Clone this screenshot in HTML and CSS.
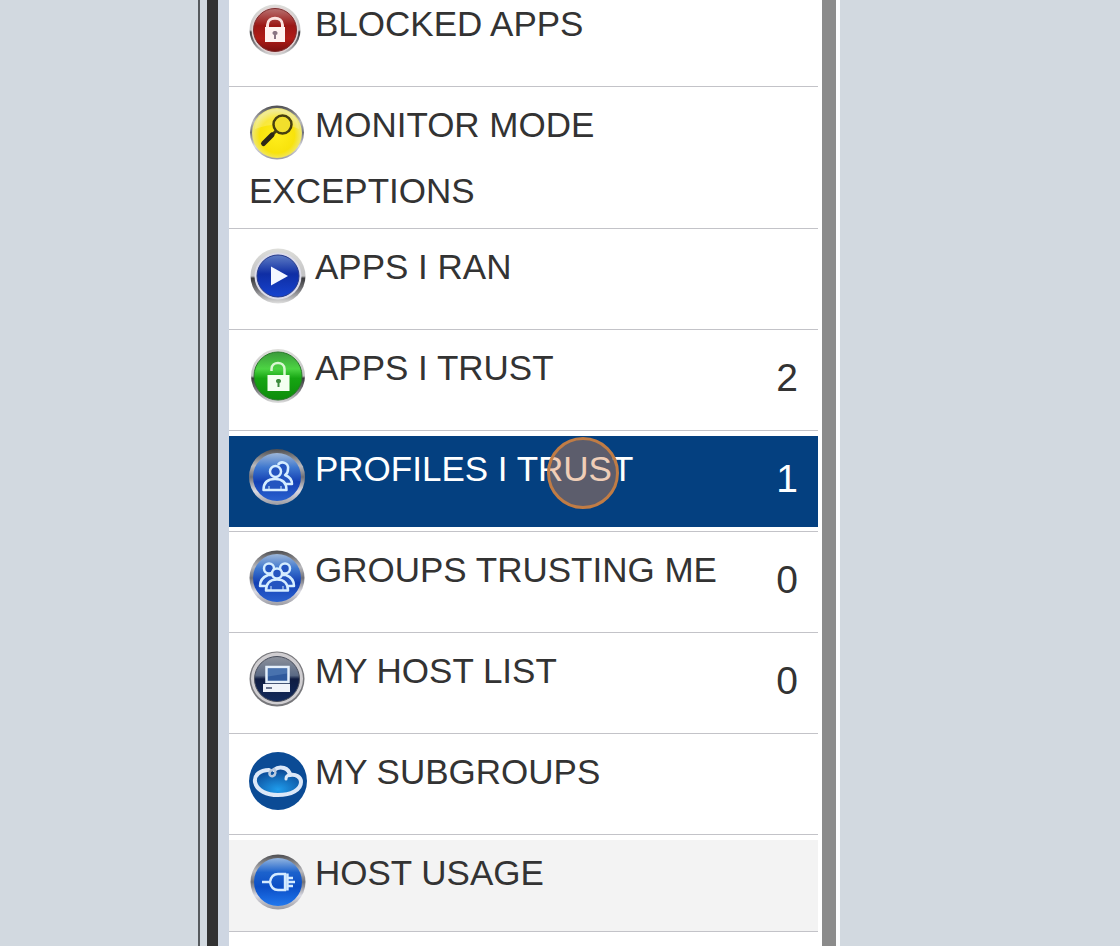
FILE: index.html
```html
<!DOCTYPE html>
<html lang="en">
<head>
    <meta charset="UTF-8">
    <meta name="viewport" content="width=device-width, initial-scale=1.0">
    <title>Profiles I Trust</title>
    <link rel="stylesheet" href="styles.css">
</head>
<body>

<!-- Shared gradients for the round icons -->
<svg class="defs" aria-hidden="true">
    <defs>
        <linearGradient id="rim" x1="0" y1="0" x2="0" y2="1">
            <stop offset="0" stop-color="#4d4d50"/>
            <stop offset="0.3" stop-color="#b9b9bd"/>
            <stop offset="0.5" stop-color="#6f7078"/>
            <stop offset="0.75" stop-color="#d9d9e2"/>
            <stop offset="1" stop-color="#9b9ba2"/>
        </linearGradient>
        <linearGradient id="silver" x1="0" y1="0" x2="0" y2="1">
            <stop offset="0" stop-color="#dededa"/>
            <stop offset="0.5" stop-color="#c2c2c4"/>
            <stop offset="0.54" stop-color="#3a3a3d"/>
            <stop offset="0.75" stop-color="#77777b"/>
            <stop offset="1" stop-color="#e0e0e0"/>
        </linearGradient>
        <linearGradient id="red" x1="0" y1="0" x2="0" y2="1">
            <stop offset="0" stop-color="#b77070"/>
            <stop offset="0.4" stop-color="#9b1715"/>
            <stop offset="0.7" stop-color="#b01c17"/>
            <stop offset="1" stop-color="#7a100f"/>
        </linearGradient>
        <radialGradient id="yellow" cx="0.5" cy="0.55" r="0.5">
            <stop offset="0" stop-color="#ffee1c"/>
            <stop offset="0.7" stop-color="#f8e30c"/>
            <stop offset="1" stop-color="#eee77a"/>
        </radialGradient>
        <linearGradient id="navy" x1="0" y1="0" x2="0" y2="1">
            <stop offset="0" stop-color="#5f7dc4"/>
            <stop offset="0.45" stop-color="#0f2ea4"/>
            <stop offset="1" stop-color="#1643cf"/>
        </linearGradient>
        <linearGradient id="green" x1="0" y1="0" x2="0" y2="1">
            <stop offset="0" stop-color="#3b9a3b"/>
            <stop offset="0.35" stop-color="#4cd443"/>
            <stop offset="0.55" stop-color="#16a512"/>
            <stop offset="1" stop-color="#0d8c0b"/>
        </linearGradient>
        <linearGradient id="blue" x1="0" y1="0" x2="0" y2="1">
            <stop offset="0" stop-color="#9db6d8"/>
            <stop offset="0.3" stop-color="#3f78cf"/>
            <stop offset="0.6" stop-color="#1340b4"/>
            <stop offset="1" stop-color="#2a62d0"/>
        </linearGradient>
        <linearGradient id="plug" x1="0" y1="0" x2="0" y2="1">
            <stop offset="0" stop-color="#93b5e0"/>
            <stop offset="0.3" stop-color="#1c62cc"/>
            <stop offset="0.6" stop-color="#0b4ec6"/>
            <stop offset="1" stop-color="#2178ee"/>
        </linearGradient>
        <linearGradient id="steel" x1="0" y1="0" x2="0" y2="1">
            <stop offset="0" stop-color="#8d929c"/>
            <stop offset="0.42" stop-color="#5b6a85"/>
            <stop offset="0.5" stop-color="#101d42"/>
            <stop offset="1" stop-color="#122a5c"/>
        </linearGradient>
        <radialGradient id="water" cx="0.5" cy="0.8" r="0.7">
            <stop offset="0" stop-color="#1f9cec"/>
            <stop offset="1" stop-color="#0b4a97"/>
        </radialGradient>
    </defs>
</svg>

<div class="page">
    <div class="window">
        <nav class="panel">
            <ul class="menu">
                <li class="menu-item">
                    <a href="#" class="menu-link">
                        <span class="label"><svg class="icon" viewBox="0 0 58 58" aria-hidden="true">
                            <circle cx="26" cy="26" r="25.500" fill="url(#silver)"/>
                            <circle cx="26" cy="26" r="23.500" fill="#e2d3d4"/>
                            <circle cx="26" cy="26" r="21.500" fill="url(#red)" stroke="#7d2c2c"/>
                            <path d="M18.500 25v-4c0-9 15-9 15 0v4" fill="none" stroke="#fbe3e0" stroke-width="3"/>
                            <rect x="16" y="23" width="20" height="15" fill="#fff3f1"/>
                            <path d="M26 27a2 2 0 0 1 1 4v4h-2v-4a2 2 0 0 1 1-4z" fill="#8b7583"/>
                        </svg>BLOCKED APPS</span>
                    </a>
                </li>
                <li class="menu-item">
                    <a href="#" class="menu-link">
                        <span class="label"><svg class="icon" viewBox="0 0 58 58" aria-hidden="true">
                            <circle cx="28" cy="27.500" r="27" fill="url(#rim)"/>
                            <circle cx="28" cy="28" r="25" fill="url(#yellow)"/>
                            <path d="M6 24a22 20 0 0 1 44 0c-14-6-30-5-44 0z" fill="#fff" opacity="0.2"/>
                            <circle cx="33.500" cy="19.500" r="9" fill="#f1df2c" stroke="#47400f" stroke-width="2.500"/>
                            <path d="M27 26l-5 5" stroke="#47400f" stroke-width="3"/>
                            <path d="M23 30L14.500 38.500" stroke="#2c2817" stroke-width="5" stroke-linecap="round"/>
                        </svg>MONITOR MODE EXCEPTIONS</span>
                    </a>
                </li>
                <li class="menu-item">
                    <a href="#" class="menu-link">
                        <span class="label"><svg class="icon" viewBox="0 0 58 58" aria-hidden="true">
                            <circle cx="29" cy="29" r="27.500" fill="url(#silver)"/>
                            <circle cx="29" cy="29" r="23.500" fill="#dcdcea"/>
                            <circle cx="29" cy="29" r="21" fill="url(#navy)" stroke="#24398b"/>
                            <path d="M22 19.500l17 9.500-17 9.500z" fill="#f4f7ff"/>
                        </svg>APPS I RAN</span>
                    </a>
                </li>
                <li class="menu-item">
                    <a href="#" class="menu-link">
                        <span class="label"><svg class="icon" viewBox="0 0 58 58" aria-hidden="true">
                            <circle cx="29" cy="28" r="27" fill="url(#silver)"/>
                            <circle cx="29" cy="28" r="24" fill="url(#green)" stroke="#2c7a2c"/>
                            <path d="M22.500 23v-2c0-8 13-8 13 0v9" fill="none" stroke="#d9f7d2" stroke-width="2.500"/>
                            <rect x="18.500" y="27" width="22" height="16" fill="#f3fff0"/>
                            <path d="M29.500 31a2 2 0 0 1 1 4v4h-2v-4a2 2 0 0 1 1-4z" fill="#3b8b3b"/>
                        </svg>APPS I TRUST</span>
                        <span class="count">2</span>
                    </a>
                </li>
                <li class="menu-item active">
                    <a href="#" class="menu-link" aria-current="page">
                        <span class="label"><svg class="icon" viewBox="0 0 58 58" aria-hidden="true">
                            <circle cx="28" cy="28" r="28" fill="url(#rim)"/>
                            <circle cx="28" cy="28" r="24" fill="url(#blue)"/>
                            <g fill="#2455c0" stroke="#d5edff" stroke-width="2.500" stroke-linejoin="round">
                                <path d="M29 16c3-5 11-2 10 4 0 3-1 5-3 6 5 2 7 5 7 9h-8"/>
                                <path d="M14.500 41c0-7 4-11 11.500-11s11.500 4 11.500 11z"/>
                                <circle cx="26.500" cy="22.500" r="5.500"/>
                                <path d="M20 41v-4M32 41v-4" fill="none" stroke-width="1"/>
                            </g>
                        </svg>PROFILES I TRUST</span>
                        <span class="count">1</span>
                    </a>
                    <span class="pointer"></span>
                </li>
                <li class="menu-item">
                    <a href="#" class="menu-link">
                        <span class="label"><svg class="icon" viewBox="0 0 58 58" aria-hidden="true">
                            <circle cx="28" cy="28" r="27.500" fill="url(#rim)"/>
                            <circle cx="28" cy="28" r="24" fill="url(#blue)"/>
                            <g fill="#2455c0" stroke="#d5edff" stroke-width="2.500" stroke-linejoin="round">
                                <path d="M11 36c0-6 3-9 8-11h18c5 2 8 5 8 11z"/>
                                <circle cx="20" cy="18.500" r="5"/>
                                <circle cx="36" cy="18.500" r="5"/>
                                <path d="M17 40.500c0-7 4-11 11-11s11 4 11 11z"/>
                                <circle cx="28" cy="23.500" r="5"/>
                                <path d="M22 40v-4M34 40v-4" fill="none" stroke-width="1"/>
                            </g>
                        </svg>GROUPS TRUSTING ME</span>
                        <span class="count">0</span>
                    </a>
                </li>
                <li class="menu-item">
                    <a href="#" class="menu-link">
                        <span class="label"><svg class="icon" viewBox="0 0 58 58" aria-hidden="true">
                            <circle cx="28" cy="28" r="27.500" fill="#77777b"/>
                            <circle cx="28" cy="27.500" r="26" fill="#d0ced1"/>
                            <circle cx="28" cy="28" r="22.500" fill="url(#steel)" stroke="#494e5c"/>
                            <rect x="17.500" y="16" width="22" height="15" fill="#2f5a9d" stroke="#e4effb" stroke-width="2.500"/>
                            <path d="M19 17.500h19v5l-19 3z" fill="#6f96c8" opacity="0.4"/>
                            <path d="M14 33h27v8h-27z" fill="#f0f3fa"/>
                            <path d="M17 37h6" stroke="#6c7690" stroke-width="2"/>
                        </svg>MY HOST LIST</span>
                        <span class="count">0</span>
                    </a>
                </li>
                <li class="menu-item">
                    <a href="#" class="menu-link">
                        <span class="label"><svg class="icon" viewBox="0 0 58 58" aria-hidden="true">
                            <circle cx="29" cy="29" r="29" fill="#0b4b95"/>
                            <path d="M20 18c-9 0-15 5-14 12 2 9 12 13 23 13 13 0 23-5 23-13 0-5-5-8-11-7-1-7-10-10-16-5" fill="url(#water)" stroke="#dce8f8" stroke-width="4" stroke-linecap="round"/>
                            <path d="M23 18c-4 2-3 7 1 6 3-1 3-5 1-7" fill="none" stroke="#b9c9de" stroke-width="2.500" stroke-linecap="round"/>
                            <path d="M41 23c-2 0-4 1-4 4" fill="none" stroke="#dce8f8" stroke-width="3" stroke-linecap="round"/>
                        </svg>MY SUBGROUPS</span>
                    </a>
                </li>
                <li class="menu-item hovered">
                    <a href="#" class="menu-link">
                        <span class="label"><svg class="icon" viewBox="0 0 58 58" aria-hidden="true">
                            <circle cx="29" cy="29" r="27.500" fill="url(#rim)"/>
                            <circle cx="29" cy="29" r="24" fill="url(#plug)"/>
                            <path d="M13 29h8M21 29c1-6 4-8 8-8h7v16h-7c-4 0-7-2-8-8zM38.500 20.500v17M39 25h5M39 29h7M39 33h5" fill="none" stroke="#d5ebff" stroke-width="2.400"/>
                        </svg>HOST USAGE</span>
                    </a>
                </li>
            </ul>
        </nav>
    </div>
</div>

</body>
</html>
```

FILE: styles.css
```css
body {
    margin: 0;
    background-color: #d2d9e0;
    color: #333;
    font-family: "Liberation Sans", Arial, sans-serif;
}

.defs {
    position: absolute;
    width: 0;
    height: 0;
}

.page {
    display: grid;
    grid-template-columns: minmax(0, 1fr) 280px;
    min-height: 100vh;
    padding-left: 198px;
    box-sizing: border-box;
    overflow: hidden;
}

/* Window frame */
.window {
    display: flex;
    border-left: 2px solid #565a5e;
    border-right: 4px solid #fbfcfd;
    padding-left: 7px;
}

.panel {
    flex: 1;
    background-color: #fff;
    border-left: 11px solid #323232;
    border-right: 14px solid #8b8b8b;
    padding-right: 4px;
}

/* Menu, scrolled slightly past the first row */
.menu {
    list-style: none;
    margin: -14px 0 0;
    padding: 0;
    border-left: 11px solid #ced6e2;
    height: 100%;
    padding-bottom: 14px;
}

.menu-item {
    position: relative;
    padding: 5px 0 4px;
    border-bottom: 1px solid #c3c3c8;
}

.menu-link {
    display: flex;
    min-height: 91px;
    padding: 0 20px;
    color: #333;
    text-decoration: none;
}

.label {
    flex: 1;
    font-size: 35px;
    line-height: 66px;
}

.count {
    font-size: 39px;
    line-height: 86px;
}

.icon {
    width: 58px;
    height: 58px;
    margin: 0 8px -5px 0;
    vertical-align: -21px;
}

.active .menu-link {
    background-color: #044080;
    color: #fff;
}

.hovered {
    padding-bottom: 0;
}

.hovered .menu-link {
    background-color: #f3f3f3;
}

/* Click marker */
.pointer {
    position: absolute;
    top: 6px;
    left: 318px;
    width: 72px;
    height: 72px;
    box-sizing: border-box;
    border: 3px solid #c07c45;
    border-radius: 50%;
    background-color: rgba(218, 136, 80, 0.41);
}
```
